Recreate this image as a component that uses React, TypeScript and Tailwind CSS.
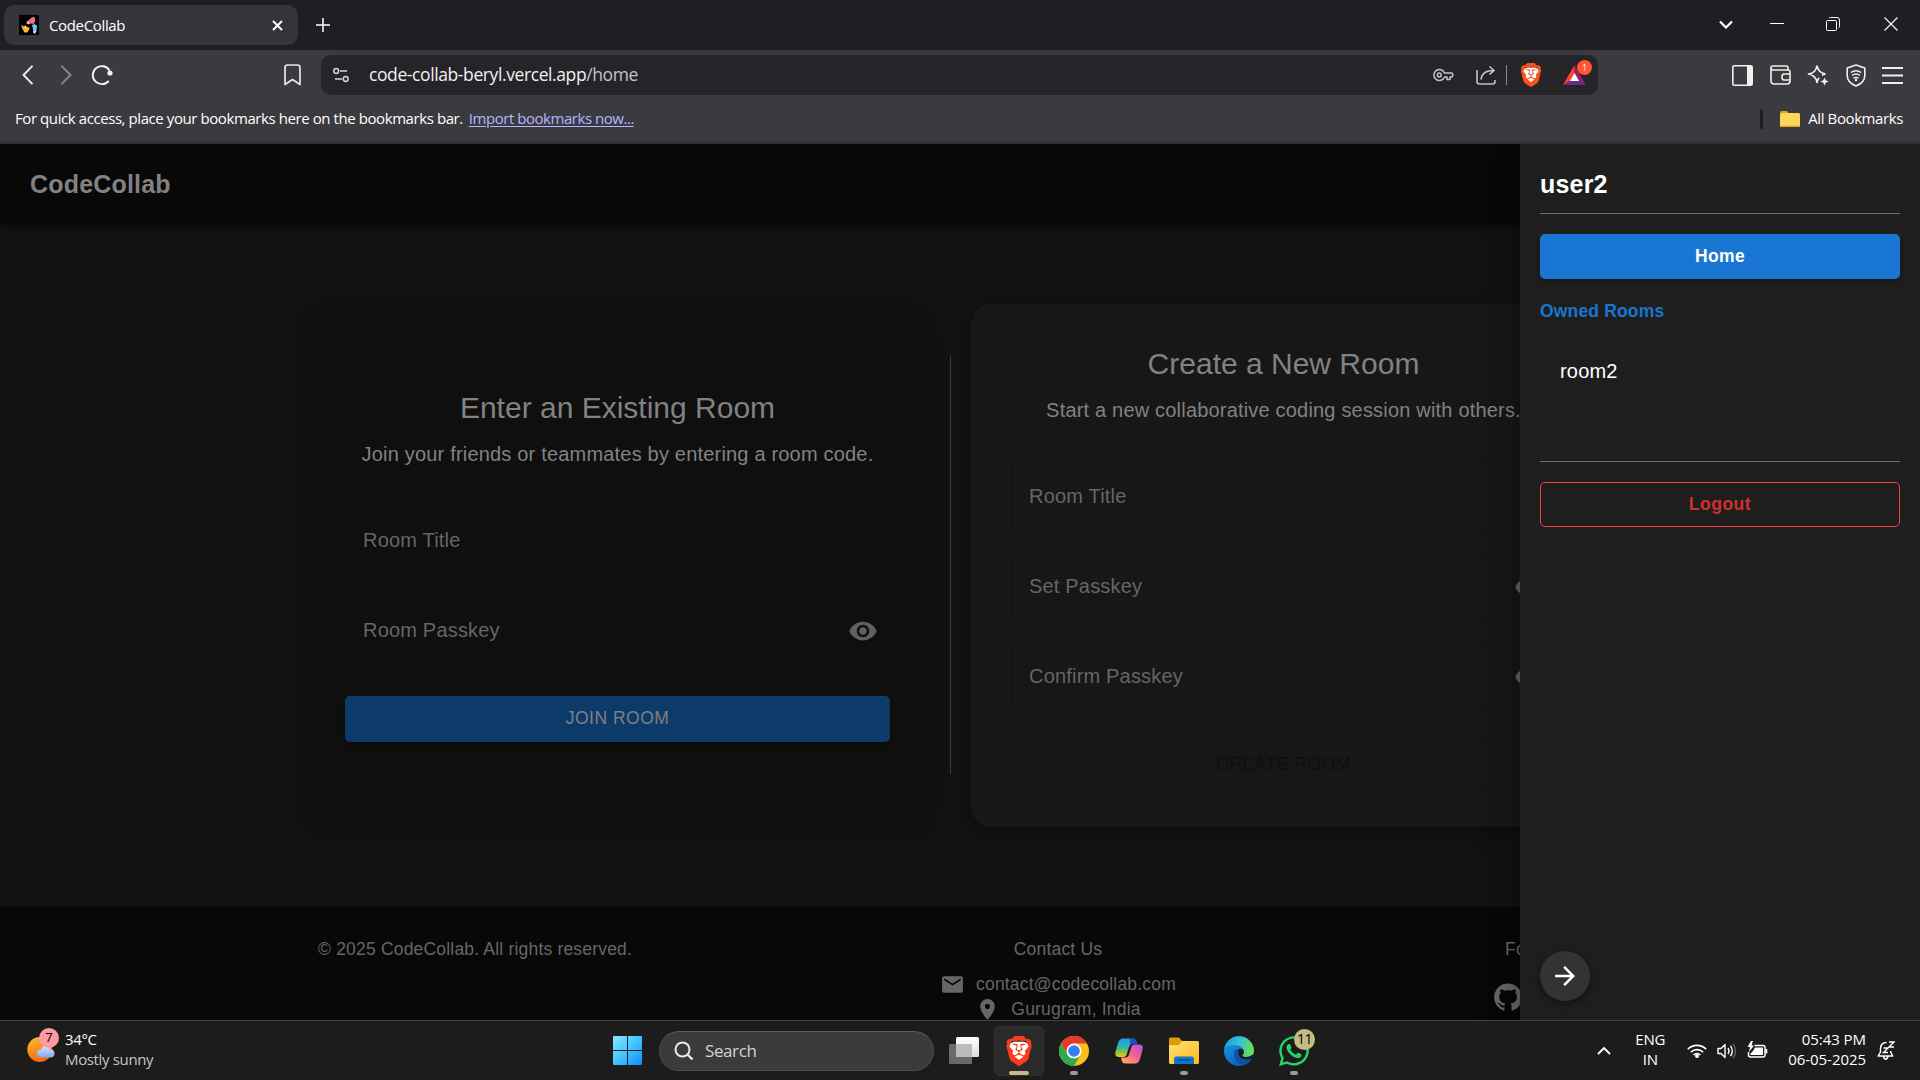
import React from "react";
import { SiBrave } from "react-icons/si";
import { FaWhatsapp } from "react-icons/fa";

const SEGOE = "font-['Open_Sans',sans-serif]";

function Svg({ w, h, box, className, children }: { w: number; h: number; box?: string; className?: string; children: React.ReactNode }) {
  return (
    <svg width={w} height={h} viewBox={box ?? `0 0 ${w} ${h}`} fill="none" className={"block shrink-0 " + (className ?? "")}>
      {children}
    </svg>
  );
}

function Brave({ size, color, className }: { size: number; color: string; className?: string }) {
  return (
    <span className={"grid shrink-0 place-items-center " + (className ?? "")}>
      <Svg w={size} h={size} box="0 0 24 24" className="col-start-1 row-start-1">
        <path d="M5 6l3-1.5h8L19 6l1 3-2.500 8L12 21l-5.500-4L4 9z" fill="#fff" />
      </Svg>
      <SiBrave size={size} color={color} className="col-start-1 row-start-1" />
    </span>
  );
}

function TabStrip() {
  return (
    <div className="flex h-[50px] items-start bg-[#1f1e23] pl-1 pt-[5px] text-white">
      <div className="flex h-10 w-[294px] items-center rounded-[10px] bg-[#35343a] pl-[15px] pr-[15px]">
        <Svg w={20} h={20}>
          <path d="M0 0h20v20H0z" fill="#000" />
          <path d="M8 6l2-1 2-2 2-1 2 .5V6l-1 3-3-.5-3 1-1.500-1z" fill="#f0707c" />
          <path d="M2 10l2 1 1.500 1 .5-2 2 2 2.500.5-.5 2.500-2 2.500H5.500L3.500 14z" fill="#ffb92e" />
          <path d="M13 10l2.500-1 2.500 1.500-.5 6-2 2-1.500-1V14z" fill="#7cc0f2" />
          <path d="M8 7h2v1.500H8zM5.500 11H7v1.500H5.500zM14.500 16h2v2.500h-1.500z" fill="#ffd9a8" />
        </Svg>
        <span className="ml-[10px] grow text-[15px] tracking-[-0.35px]">CodeCollab</span>
        <Svg w={11} h={11}>
          <path d="M1 1l9 9M10 1l-9 9" stroke="#fff" strokeWidth="2" />
        </Svg>
      </div>
      <Svg w={14} h={14} className="ml-[18px] mt-[13px]">
        <path d="M7 0v14M0 7h14" stroke="#fff" strokeWidth="1.500" />
      </Svg>
      <div className="flex grow items-center justify-end pr-[22px] pt-3">
        <Svg w={14} h={9} className="mr-[37px]">
          <path d="M1 1.500l6 6 6-6" stroke="#fff" strokeWidth="2.200" />
        </Svg>
        <Svg w={14} h={14} className="mr-[42px]">
          <path d="M0 6.500h14" stroke="#fff" />
        </Svg>
        <Svg w={14} h={14} className="mr-[44px]">
          <rect x=".5" y="3.500" width="10" height="10" rx="1" stroke="#fff" />
          <path d="M3 1.200Q3.200.5 4.500.5h6.500q2.500 0 2.500 2.500v6.500q0 1.300-.8 1.500" stroke="#fff" />
        </Svg>
        <Svg w={14} h={14}>
          <path d="M.5.5l13 13M13.500.5l-13 13" stroke="#fff" strokeWidth="1.100" />
        </Svg>
      </div>
    </div>
  );
}

function Toolbar() {
  return (
    <div className="flex h-[50px] items-center bg-[#3b3a3f]">
      <Svg w={12} h={20} className="ml-[22px]">
        <path d="M10.500.8L1.500 10l9 9.200" stroke="#f2f2f2" strokeWidth="1.900" />
      </Svg>
      <Svg w={12} h={20} className="ml-[26px]">
        <path d="M1.500.8l9 9.200-9 9.200" stroke="#89888c" strokeWidth="1.900" />
      </Svg>
      <Svg w={22} h={22} className="ml-[19px]">
        <path d="M17.800 16.800A9 9 0 1 1 18.500 6.500" stroke="#f2f2f2" strokeWidth="1.900" />
        <circle cx="19" cy="9" r="2.600" fill="#f2f2f2" />
      </Svg>
      <Svg w={17} h={22} className="ml-[171px]">
        <path d="M1 3.500Q1 1 3.500 1h10Q16 1 16 3.500V20.500l-7.500-5-7.500 5z" stroke="#e8e8e8" strokeWidth="1.700" strokeLinejoin="round" />
      </Svg>
      <div className="ml-5 flex h-10 w-[1277px] items-center rounded-[10px] bg-[#252429]">
        <Svg w={16} h={16} className="ml-[12px]">
          <path d="M7 4h7M2 12h7" stroke="#d8d8d8" strokeWidth="1.600" />
          <circle cx="3.200" cy="4" r="2.400" stroke="#d8d8d8" strokeWidth="1.500" />
          <circle cx="12.700" cy="12" r="2.400" stroke="#d8d8d8" strokeWidth="1.500" />
        </Svg>
        <span className="ml-[20px] grow text-[17.5px] leading-none tracking-[-0.4px] text-[#f0f0f1]">
          code-collab-beryl.vercel.app<span className="text-[#c4c4c6]">/home</span>
        </span>
        <Svg w={21} h={14}>
          <path d="M11.500 5A5.500 5.500 0 1 0 11.500 9H14v2.500h3V9h2l1-2-1-2z" stroke="#c3c3c5" strokeWidth="1.600" strokeLinejoin="round" />
          <circle cx="6.300" cy="7" r="1.900" stroke="#c3c3c5" strokeWidth="1.500" />
        </Svg>
        <Svg w={20} h={20} className="ml-[22px]">
          <path d="M1 5v11.500Q1 19 3.500 19h13Q19 19 19 16.500V15M5 14.500Q6 5.500 17.500 5.500M13.500 1.500l4.500 4-4.500 4" stroke="#c3c3c5" strokeWidth="1.600" />
        </Svg>
        <div className="ml-[10px] h-5 w-px bg-[#8a898d]" />
        <Brave size={24} color="#ff4f14" className="ml-3" />
        <div className="relative ml-[20px] mr-[11px] h-5 w-[24px]">
          <Svg w={24} h={20}>
            <path d="M11.500 0L0 20l7.500-4.500 4-7z" fill="#ff4724" />
            <path d="M11.500 0L23 20l-7.500-4.500-4-7z" fill="#9e1f63" />
            <path d="M0 20h23l-7.500-4.500h-8z" fill="#662d91" />
            <path d="M11.500 8l4.500 8H7z" fill="#fff" />
          </Svg>
          <span className="absolute -top-[5px] left-[14px] grid size-[15px] place-items-center rounded-full bg-[#ff5530] text-[9px] leading-none text-white">1</span>
        </div>
      </div>
      <div className="flex grow items-center justify-end gap-[16.5px] pr-[17px] text-[#f0f0f0]">
        <Svg w={21} h={21}>
          <rect x=".8" y=".8" width="19.400" height="19.400" rx="1.500" stroke="currentColor" strokeWidth="1.600" />
          <path d="M15 1h5v19h-5z" fill="currentColor" />
        </Svg>
        <Svg w={21} h={20}>
          <path d="M1 3v13q0 3 3 3h13q3 0 3-3V7q0-2-2-2H3Q1 5 1 3t2-2h13q2 0 2 2v2M20 9h-6q-2 0-2 3t2 3h6" stroke="currentColor" strokeWidth="1.600" />
        </Svg>
        <Svg w={22} h={22}>
          <path d="M10 1.500q1 7 8.500 8.500M10 1.500q-1 7.500-8.500 8.500 7.500 1.500 8.500 8.500 .5-3 2-4.800M18.500 10q-2 .4-3.500 1.200" stroke="currentColor" strokeWidth="1.700" strokeLinejoin="round" />
          <path d="M17.500 13.500l1.200 2.800 2.800 1.200-2.800 1.200-1.200 2.800-1.200-2.800-2.800-1.200 2.800-1.200z" fill="currentColor" />
        </Svg>
        <Svg w={20} h={23}>
          <path d="M10 1l8.800 3v7.500Q18.800 18.500 10 22 1.200 18.500 1.200 11.500V4z" stroke="currentColor" strokeWidth="1.600" strokeLinejoin="round" />
          <path d="M4.800 8.500q5.200-3.500 10.400 0M6 11.500q4-2.800 8 0M7.500 14.200q2.500-1.600 5 0" stroke="currentColor" strokeWidth="1.500" />
          <circle cx="10" cy="16" r="1.200" fill="currentColor" />
        </Svg>
        <Svg w={21} h={17}>
          <path d="M0 1h21M0 8.500h21M0 16h21" stroke="currentColor" strokeWidth="1.800" />
        </Svg>
      </div>
    </div>
  );
}

function BookmarksBar() {
  return (
    <div className="flex h-11 items-center border-b-2 border-[#323136] bg-[#3b3a3f] pb-[5px] pl-[15px] pr-[17px] text-[15px] text-white">
      <span className="tracking-[-0.42px]">For quick access, place your bookmarks here on the bookmarks bar.</span>
      <span className="ml-[6px] tracking-[-0.46px] text-[#b5b5ff] underline underline-offset-2">Import bookmarks now...</span>
      <div className="ml-auto h-5 w-[3px] rounded bg-[#1f1e23]" />
      <Svg w={20} h={16} className="ml-[17px]">
        <path d="M0 1.500Q0 0 1.500 0H7l2 2.500H0z" fill="#e0a010" />
        <rect y="2" width="20" height="14" rx="1.500" fill="#ffd55a" />
        <path d="M0 14.500h20q0 1.500-1.500 1.500h-17Q0 16 0 14.500z" fill="#e3a92b" />
      </Svg>
      <span className="ml-2 tracking-[-0.4px]">All Bookmarks</span>
    </div>
  );
}

const EYE =
  "M12 4.500C7 4.500 2.730 7.610 1 12c1.730 4.390 6 7.500 11 7.500s9.270-3.110 11-7.500c-1.730-4.390-6-7.500-11-7.500M12 17c-2.760 0-5-2.240-5-5s2.240-5 5-5 5 2.240 5 5-2.240 5-5 5m0-8c-1.660 0-3 1.340-3 3s1.340 3 3 3 3-1.340 3-3-1.340-3-3-3";

function Field({ label, eye, border }: { label: string; eye?: boolean; border: string }) {
  return (
    <div className={"flex h-[70px] items-center justify-between rounded-[5px] border pl-[17px] pr-[11px] " + border}>
      <span className="pb-[2px] text-[20px] leading-[30px] tracking-[0.19px] text-[#666]">{label}</span>
      {eye && (
        <Svg w={30} h={30} box="0 0 24 24">
          <path d={EYE} fill="#606060" />
        </Svg>
      )}
    </div>
  );
}

function CardHead({ title, text }: { title: string; text: string }) {
  return (
    <div className="mb-[37px] text-center text-[#828282]">
      <h2 className="text-[30px] leading-10">{title}</h2>
      <p className="mt-[11px] text-[20px] leading-[30px] tracking-[0.19px]">{text}</p>
    </div>
  );
}

const CARD_SHADOW = "shadow-[0_5px_18px_rgba(0,0,0,0.3)]";

function Rooms() {
  return (
    <main className="flex h-[683px] items-start justify-center bg-[#121212] pt-20">
      <section className={"flex h-[523px] w-[625px] flex-col justify-center rounded-[20px] bg-[#0f0f0f] px-10 pb-[2px] " + CARD_SHADOW}>
        <CardHead title="Enter an Existing Room" text="Join your friends or teammates by entering a room code." />
        <div className="flex flex-col gap-5">
          <Field label="Room Title" border="border-[#0d0d0d]" />
          <Field label="Room Passkey" eye border="border-[#0d0d0d]" />
        </div>
        <button className="mt-[30px] h-[46px] rounded-[5px] bg-[#0c3a69] text-[17.5px] tracking-[0.5px] text-[#808080] shadow-[0_2px_5px_rgba(0,0,0,0.4)]">JOIN ROOM</button>
      </section>
      <div className="mx-5 mt-[52px] h-[418px] w-px bg-[#3c3c3c]" />
      <section className={"flex h-[523px] w-[625px] flex-col justify-center rounded-[20px] bg-[#171717] px-10 " + CARD_SHADOW}>
        <CardHead title="Create a New Room" text="Start a new collaborative coding session with others." />
        <div className="flex flex-col gap-5">
          <Field label="Room Title" border="border-[#121212]" />
          <Field label="Set Passkey" eye border="border-[#121212]" />
          <Field label="Confirm Passkey" eye border="border-[#121212]" />
        </div>
        <button className="mt-[30px] h-[45px] rounded-[5px] border border-[#151515] text-[17.5px] tracking-[0.5px] text-[#0f0f0f]">CREATE ROOM</button>
      </section>
    </main>
  );
}

function Footer() {
  return (
    <footer className="flex h-[250px] items-start bg-[#080808] pl-[318px] pt-[30px] text-[17.5px] leading-[25px] tracking-[0.19px] text-[#666]">
      <p className="w-[545px]">© 2025 CodeCollab. All rights reserved.</p>
      <div className="-ml-[6px] flex w-[402px] flex-col items-center">
        <p>Contact Us</p>
        <p className="mt-[10px] flex items-center">
          <Svg w={25} h={25} box="0 0 24 24" className="mr-[11px]">
            <path d="M20 4H4c-1.100 0-1.990.9-1.990 2L2 18c0 1.100.9 2 2 2h16c1.100 0 2-.9 2-2V6c0-1.100-.9-2-2-2m0 4-8 5-8-5V6l8 5 8-5z" fill="#666" />
          </Svg>
          contact@codecollab.com
        </p>
        <p className="flex items-center">
          <Svg w={25} h={25} box="0 0 24 24" className="mr-[11px]">
            <path d="M12 2C8.130 2 5 5.130 5 9c0 5.250 7 13 7 13s7-7.750 7-13c0-3.870-3.130-7-7-7m0 9.500c-1.380 0-2.500-1.120-2.500-2.500s1.120-2.500 2.500-2.500 2.500 1.120 2.500 2.500-1.120 2.500-2.500 2.500" fill="#666" />
          </Svg>
          Gurugram, India
        </p>
      </div>
      <div className="ml-[234px]">
        <p className="pl-[12px]">Follow Us</p>
        <Svg w={30} h={30} box="0 0 24 24" className="mt-[20px]">
          <path
            d="M12 1.270a11 11 0 00-3.480 21.460c.55.09.73-.28.73-.55v-1.840c-3.030.64-3.670-1.460-3.670-1.460-.55-1.290-1.280-1.650-1.280-1.650-.92-.65.1-.65.1-.65 1.100 0 1.730 1.100 1.730 1.100.92 1.650 2.570 1.200 3.210.92a2 2 0 01.64-1.470c-2.470-.27-5.040-1.190-5.040-5.500 0-1.100.46-2.100 1.200-2.840a3.760 3.760 0 010-2.930s.91-.28 3.110 1.100c1.800-.49 3.700-.49 5.500 0 2.100-1.380 3.020-1.100 3.020-1.100a3.760 3.760 0 01.1 2.930c.83.74 1.200 1.740 1.200 2.940 0 4.210-2.570 5.130-5.040 5.400.45.37.82.92.82 2.020v3.030c0 .27.1.64.73.55A11 11 0 0012 1.270"
            fill="#666"
          />
        </Svg>
      </div>
    </footer>
  );
}

function Drawer() {
  return (
    <aside className="absolute inset-y-0 right-0 flex w-[400px] flex-col bg-[#1e1e1e] px-5 pb-[19px] pt-5 text-white shadow-[0_10px_12px_-6px_rgba(0,0,0,0.2),0_20px_30px_2px_rgba(0,0,0,0.14),0_8px_38px_7px_rgba(0,0,0,0.12)]">
      <h2 className="text-[25px] font-bold leading-10 tracking-[0.19px]">user2</h2>
      <hr className="mt-[9px] border-[#6f6f6f]" />
      <button className="mt-5 h-[45px] rounded-[5px] bg-[#1976d2] pb-px text-[17.5px] font-bold tracking-[0.4px] shadow-[0_2px_5px_rgba(0,0,0,0.35)]">Home</button>
      <h3 className="mt-5 text-[17.5px] font-bold leading-[25px] tracking-[0.16px] text-[#1976d2]">Owned Rooms</h3>
      <p className="mt-8 pl-5 text-[20px] leading-[30px] tracking-[0.19px]">room2</p>
      <hr className="mt-[75px] border-[#6f6f6f]" />
      <button className="mt-5 h-[45px] rounded-[5px] border border-[#f44336] pb-px text-[17.5px] font-bold tracking-[0.5px] text-[#d32f2f]">Logout</button>
      <button className="mt-auto grid size-[50px] place-items-center rounded-full bg-[#333] shadow-[0_3px_8px_rgba(0,0,0,0.4)]">
        <Svg w={30} h={30} box="0 0 24 24">
          <path d="m12 4-1.410 1.410L16.170 11H4v2h12.170l-5.580 5.590L12 20l8-8z" fill="#fff" />
        </Svg>
      </button>
    </aside>
  );
}

function TaskIcon({ children, dot, active }: { children: React.ReactNode; dot?: boolean; active?: boolean }) {
  return (
    <div className={"relative grid size-[50px] place-items-center rounded-[5px] " + (active ? "border border-[#313131] bg-[#2a2a2a]" : "")}>
      {children}
      {dot && <span className="absolute bottom-[1px] left-[21px] h-1 w-2 rounded-full bg-[#9a9a9a]" />}
      {active && <span className="absolute bottom-0 left-[14px] h-1 w-5 rounded-full bg-[#c5bb85]" />}
    </div>
  );
}

function Taskbar() {
  return (
    <div className="flex h-[60px] items-center border-t border-[#404040] bg-[#1c1c1c] text-[15px] text-white">
      <div className="flex w-[613px] items-center pl-[27px]">
        <div className="relative size-[28px] shrink-0">
          <Svg w={30} h={28}>
            <defs>
              <linearGradient id="sun" x1="0" y1="0" x2="0.400" y2="1">
                <stop stopColor="#f8c030" />
                <stop offset="1" stopColor="#f46a0c" />
              </linearGradient>
              <linearGradient id="cloud" x1="0" y1="0" x2="0" y2="1">
                <stop stopColor="#d3e2fb" />
                <stop offset="1" stopColor="#84a7ee" />
              </linearGradient>
            </defs>
            <circle cx="12.800" cy="12.500" r="12.500" fill="url(#sun)" />
            <path d="M14 20.500a4 4 0 0 1 0-8 5 5 0 0 1 9.500 0 4 4 0 0 1 0 8z" fill="url(#cloud)" />
          </Svg>
          <span className="absolute -top-[9px] left-[12px] grid size-5 place-items-center rounded-full bg-[#ff99a4] text-[13px] leading-none text-black">7</span>
        </div>
        <div className="ml-[10px] pb-1 leading-5 tracking-[-0.35px]">
          <p>34°C</p>
          <p className="text-[#c6c6c6]">Mostly sunny</p>
        </div>
      </div>
      <Svg w={29} h={29}>
        <defs>
          <linearGradient id="win" x1="0" y1="0" x2="29" y2="29" gradientUnits="userSpaceOnUse">
            <stop stopColor="#8be4ff" />
            <stop offset=".5" stopColor="#45c4ff" />
            <stop offset="1" stopColor="#0a8dfb" />
          </linearGradient>
        </defs>
        <path d="M0 1q0-1 1-1h13v14H0zM15 0h13q1 0 1 1v13H15zM0 15h14v14H1q-1 0-1-1zM15 15h14v13q0 1-1 1H15z" fill="url(#win)" />
      </Svg>
      <div className="ml-[17px] flex h-10 w-[275px] items-center rounded-full border border-[#4a4a4a] border-t-[#5a5a5a] bg-[#3b3b3b] pl-[14px]">
        <Svg w={20} h={20}>
          <circle cx="8.500" cy="8.500" r="7" stroke="#e8e8e8" strokeWidth="2" />
          <path d="M13.500 13.500l5 5" stroke="#e8e8e8" strokeWidth="2.400" />
        </Svg>
        <span className="ml-[11px] text-[17px] tracking-[-0.4px] text-[#d4d4d4]">Search</span>
      </div>
      <div className="ml-[5px] flex gap-[5px]">
        <TaskIcon>
          <Svg w={30} h={28}>
            <defs>
              <linearGradient id="tv" x1="0" y1="0" x2="0" y2="1">
                <stop stopColor="#fff" />
                <stop offset="1" stopColor="#dcdcdc" />
              </linearGradient>
            </defs>
            <rect y="7" width="23" height="20" rx="1.500" fill="#6a6a6a" />
            <rect x="7" width="23" height="20" rx="1.500" fill="url(#tv)" />
            <path d="M7 7h16v13H8.500Q7 20 7 18.500z" fill="#bcbcbc" />
          </Svg>
        </TaskIcon>
        <TaskIcon active>
          <Brave size={30} color="#fb3b1e" />
        </TaskIcon>
        <TaskIcon dot>
          <Svg w={30} h={30}>
            <circle cx="15" cy="15" r="15" fill="#fbc116" />
            <path d="M2 7.500A15 15 0 0 1 28 7.500H15L8.500 18.800z" fill="#e33b2e" />
            <path d="M2 7.500A15 15 0 0 0 15 30l6.500-11.200L15 21l-6.500-2.200z" fill="#2da94f" />
            <circle cx="15" cy="15" r="7.500" fill="#fff" />
            <circle cx="15" cy="15" r="5.800" fill="#3b7ded" />
          </Svg>
        </TaskIcon>
        <TaskIcon>
          <Svg w={28} h={26}>
            <defs>
              <linearGradient id="cpa" x1="0" y1="0" x2="0" y2="1">
                <stop stopColor="#1d9be8" />
                <stop offset=".45" stopColor="#2bb3b8" />
                <stop offset=".75" stopColor="#8cc63f" />
                <stop offset="1" stopColor="#ffc20e" />
              </linearGradient>
              <linearGradient id="cpb" x1="1" y1="0" x2="0.300" y2="1">
                <stop stopColor="#a05cf0" />
                <stop offset=".5" stopColor="#ee5a98" />
                <stop offset="1" stopColor="#ffa25c" />
              </linearGradient>
            </defs>
            <path d="M8 .5h10q2.500 0 3.300 3L22 6h-4.500Q15 6 14 9l-2.500 8q-.8 2-3 2H4Q-.5 19 .4 14L3 5Q4.500.5 8 .5z" fill="url(#cpa)" />
            <path d="M15 .5h3q2.500 0 3.300 3L22 6h-4.500q-1.500 0-2.500 1z" fill="#1b50b8" />
            <path d="M20 25.500H10q-2.500 0-3.300-3L6 19.500h4.500q2.500 0 3.500-3l2.500-8q.8-2 3-2H24q4.500 0 3.600 5L25 21q-1.500 4.500-5 4.500z" fill="url(#cpb)" />
          </Svg>
        </TaskIcon>
        <TaskIcon dot>
          <Svg w={30} h={27}>
            <defs>
              <linearGradient id="fold" x1="0" y1="0" x2="1" y2="1">
                <stop stopColor="#ffdf76" />
                <stop offset="1" stopColor="#fdbd1c" />
              </linearGradient>
            </defs>
            <path d="M0 2Q0 .5 1.500.5H10L13 4v5H0z" fill="#dd9b07" />
            <path d="M0 8h10l3-4h15.500Q30 4 30 5.500V25.500Q30 27 28.500 27h-27Q0 27 0 25.500z" fill="url(#fold)" />
            <path d="M5 27v-5q0-2.500 2.500-2.500h15q2.500 0 2.500 2.500v5z" fill="#0d78cc" />
            <path d="M9 23h12" stroke="#074a86" strokeWidth="1.500" strokeLinecap="round" />
          </Svg>
        </TaskIcon>
        <TaskIcon>
          <Svg w={30} h={30}>
            <defs>
              <linearGradient id="ea" x1="0" y1="0.300" x2="1" y2="0.500">
                <stop stopColor="#1f9fe6" />
                <stop offset=".5" stopColor="#35c3d6" />
                <stop offset="1" stopColor="#6be04a" />
              </linearGradient>
              <linearGradient id="eb" x1="0" y1="0" x2="0.500" y2="1">
                <stop stopColor="#1ba0e2" />
                <stop offset="1" stopColor="#0a63c9" />
              </linearGradient>
            </defs>
            <circle cx="15" cy="15" r="15" fill="url(#eb)" />
            <path d="M.5 12A15 15 0 0 1 30 14c0 5-4 7-7.500 7-3 0-4.500-1-4-2 1-1.200 1.500-2 1.500-3.500C20 12 16 9 11 9 6 9 2.500 10 .5 12z" fill="url(#ea)" />
            <path d="M11 14c-2.500 5 0 14 8 15 4-1 7.500-3.800 8.800-6.300-7 3-13.300 0-14.300-3.700-.5-2 0-3.500 1.500-5-1.500-.8-3-.8-4 0z" fill="#10509e" />
            <path d="M15.500 12.800c2.500-.6 4.500 1 4.500 3 0 1.500-.6 2.200-1.500 3.200-.5 1 1 2 4 2 2 0 4-.7 5.500-2h2.300l-1.800 3.500c-6 2-13 1-14-3.500-.5-2.500-.7-5 1-6.200z" fill="#1c1c1c" />
          </Svg>
        </TaskIcon>
        <TaskIcon dot>
          <FaWhatsapp size={34} color="#25d366" />
          <span className="absolute left-[25px] top-[3px] grid size-[21px] place-items-center rounded-full bg-[#c5bb85] text-[14px] leading-none tracking-[-0.5px] text-black">11</span>
        </TaskIcon>
      </div>
      <div className="flex grow items-center justify-end pr-[25px]">
        <Svg w={14} h={9} className="mr-[24px]">
          <path d="M1 8l6-6 6 6" stroke="#fff" strokeWidth="1.900" />
        </Svg>
        <div className="mr-[22px] pb-[3px] text-center leading-5 tracking-[-0.2px]">
          <p>ENG</p>
          <p>IN</p>
        </div>
        <Svg w={20} h={15} className="mr-[10px]">
          <path d="M.8 6.200a13 13 0 0 1 18.400 0M3.800 9.200a8.800 8.800 0 0 1 12.400 0M6.500 12a5 5 0 0 1 7 0" stroke="#fff" strokeWidth="1.600" />
          <circle cx="10" cy="13" r="2" fill="#fff" />
        </Svg>
        <Svg w={20} h={16} className="mr-[10px]">
          <path d="M1 5.500h3L8 1.500v13L4 10.500H1z" stroke="#fff" strokeWidth="1.400" strokeLinejoin="round" />
          <path d="M11 5q2 3 0 6M13.500 2.800q3.600 5.200 0 10.400" stroke="#fff" strokeWidth="1.400" />
          <path d="M16 .8q5 7.200 0 14.400" stroke="#666" strokeWidth="1.400" />
        </Svg>
        <Svg w={21} h={18} className="mb-[2px] mr-[20px]">
          <path d="M7.500 4.500H16q2 0 2 2V14q0 2-2 2H3.500q-2 0-2-2v-3" stroke="#fff" strokeWidth="1.500" />
          <path d="M8 6.500h8v7.500H3.500v-1.500L6 10z" fill="#fff" />
          <path d="M18.500 8h1.800v4.500h-1.800z" fill="#fff" />
          <path d="M4 0L.5 6H3L2 11 7 4.500H4.500L6 0z" fill="#fff" />
        </Svg>
        <div className="mr-[11px] pb-[3px] text-right leading-5 tracking-[-0.05px]">
          <p>05:43 PM</p>
          <p>06-05-2025</p>
        </div>
        <Svg w={18} h={19}>
          <path d="M9.500 1.500Q3.500 1.500 3.500 8v3L1.200 15h14.600l-2-3.500V10M6.500 15.500q.5 2.500 2.200 2.500t2.200-2.500" stroke="#fff" strokeWidth="1.500" strokeLinejoin="round" />
          <path d="M12 1h5l-5 5h5M6.500 7H11l-4.500 4.500H11" stroke="#fff" strokeWidth="1.400" />
        </Svg>
      </div>
    </div>
  );
}

export default function App() {
  return (
    <div className="flex h-[1080px] w-[1920px] flex-col overflow-hidden bg-black">
      <div className={SEGOE}>
        <TabStrip />
        <Toolbar />
        <BookmarksBar />
      </div>
      <div className="relative h-[876px] overflow-hidden font-['Liberation_Sans',Arial,sans-serif]">
        <div className="w-[1901px]">
          <header className="relative flex h-20 w-[1920px] items-center bg-[#080808] pl-[30px] pt-[2px] text-[25px] font-bold tracking-[0.19px] text-[#828282] shadow-[0_3px_8px_rgba(0,0,0,0.45)]">CodeCollab</header>
          <Rooms />
          <Footer />
        </div>
        <Drawer />
      </div>
      <div className={SEGOE}>
        <Taskbar />
      </div>
    </div>
  );
}
